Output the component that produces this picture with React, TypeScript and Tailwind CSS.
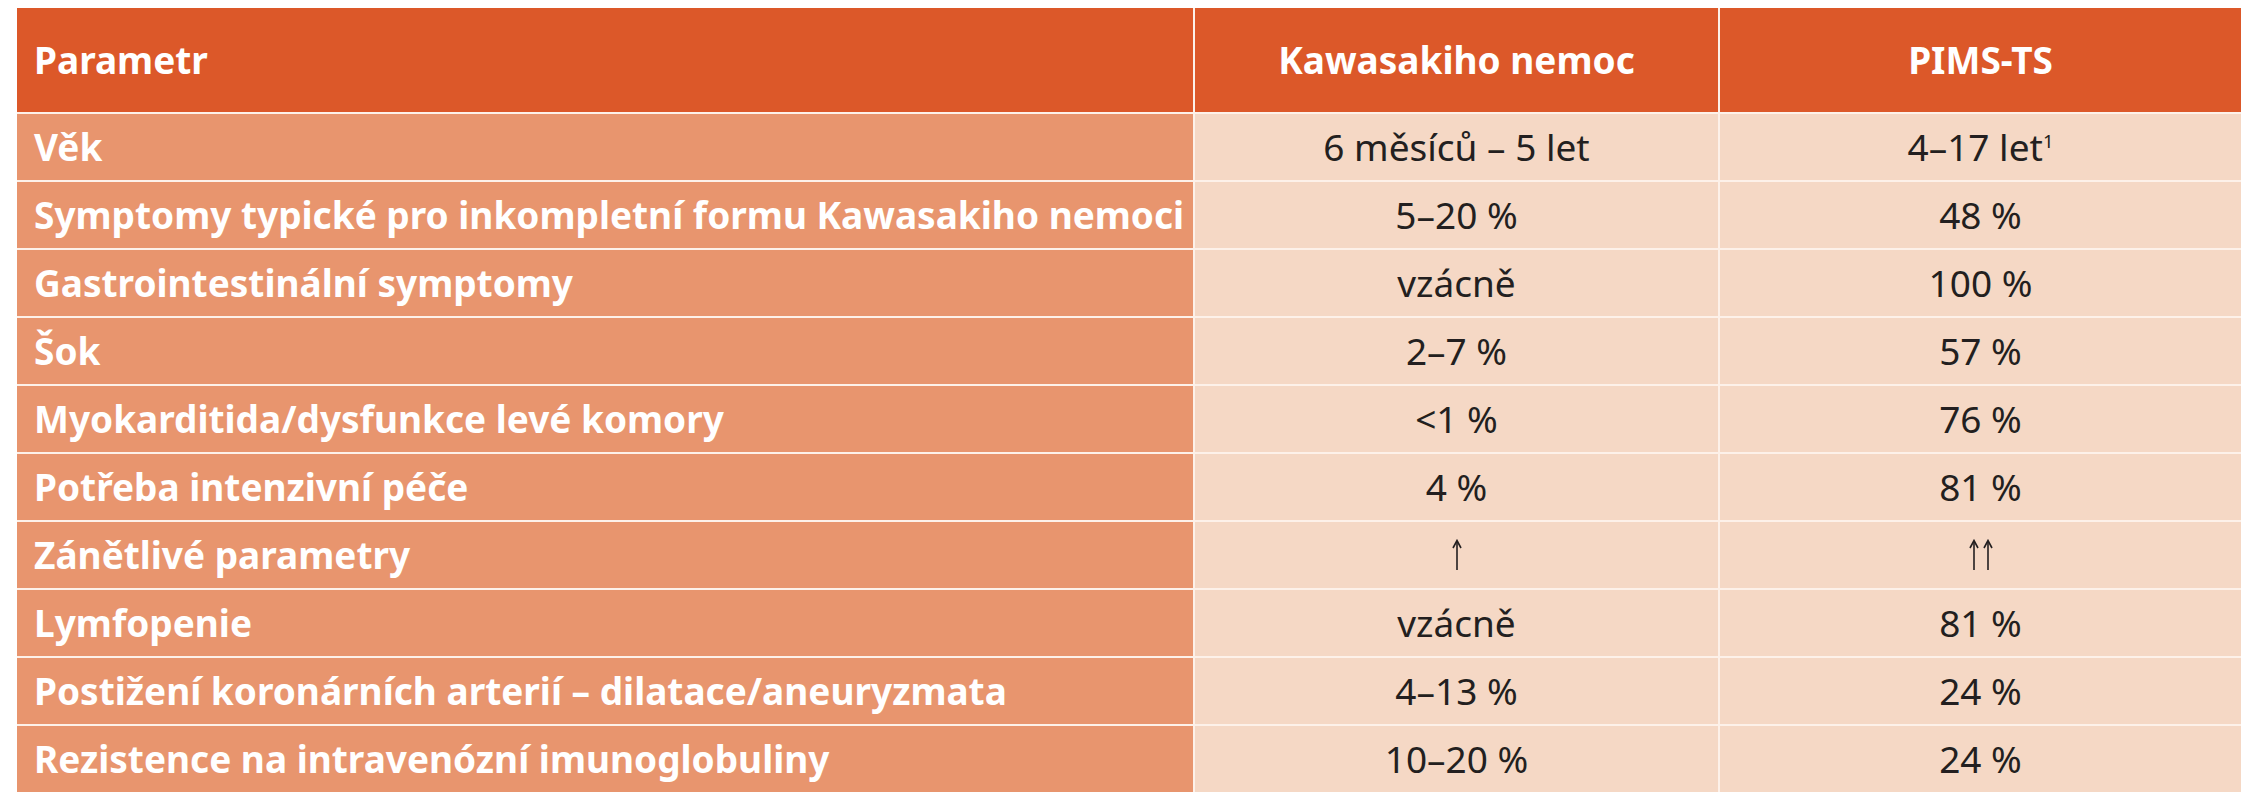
import React from "react";

type Row = { label: string; kawasaki: React.ReactNode; pims: React.ReactNode };

function UpArrow() {
  return (
    <svg width="12" height="32" viewBox="0 0 12 32" className="inline-block">
      <path d="M6 31V2" stroke="#231f20" strokeWidth="1.6" />
      <path d="M2 9L6 1.5L10 9" stroke="#231f20" strokeWidth="1.6" fill="none" />
    </svg>
  );
}

const ROWS: Row[] = [
  {
    label: "Věk",
    kawasaki: "6 měsíců – 5 let",
    pims: (
      <>
        4–17 let<sup className="relative -top-[0.35em] text-[0.5em]">1</sup>
      </>
    ),
  },
  { label: "Symptomy typické pro inkompletní formu Kawasakiho nemoci", kawasaki: "5–20 %", pims: "48 %" },
  { label: "Gastrointestinální symptomy", kawasaki: "vzácně", pims: "100 %" },
  { label: "Šok", kawasaki: "2–7 %", pims: "57 %" },
  { label: "Myokarditida/dysfunkce levé komory", kawasaki: "<1 %", pims: "76 %" },
  { label: "Potřeba intenzivní péče", kawasaki: "4 %", pims: "81 %" },
  {
    label: "Zánětlivé parametry",
    kawasaki: <UpArrow />,
    pims: (
      <span className="flex gap-[2px]">
        <UpArrow />
        <UpArrow />
      </span>
    ),
  },
  { label: "Lymfopenie", kawasaki: "vzácně", pims: "81 %" },
  { label: "Postižení koronárních arterií – dilatace/aneuryzmata", kawasaki: "4–13 %", pims: "24 %" },
  { label: "Rezistence na intravenózní imunoglobuliny", kawasaki: "10–20 %", pims: "24 %" },
];

export default function App() {
  return (
    <div className="min-h-[800px] w-full bg-white pl-[17px] pt-[8px] font-['Noto_Sans','Open_Sans',sans-serif]">
      <div className="grid w-[2224px] grid-cols-[1176px_523px_521px] gap-[2px] bg-[#fdf1e9]">
        <div className="flex h-[104px] items-center bg-[#dc5829] pl-[17px] text-[37px] font-bold text-white">
          Parametr
        </div>
        <div className="flex h-[104px] items-center justify-center bg-[#dc5829] text-[37px] font-bold text-white">
          Kawasakiho nemoc
        </div>
        <div className="flex h-[104px] items-center justify-center bg-[#dc5829] text-[37px] font-bold text-white">
          PIMS-TS
        </div>

        {ROWS.map((row) => (
          <React.Fragment key={row.label}>
            <div className="flex h-[66px] items-center bg-[#e8956e] pl-[17px] text-[37px] font-bold text-white">
              {row.label}
            </div>
            <div className="flex h-[66px] items-center justify-center bg-[#f5d8c5] text-[37px] text-[#231f20]">
              {row.kawasaki}
            </div>
            <div className="flex h-[66px] items-center justify-center bg-[#f5d8c5] text-[37px] text-[#231f20]">
              {row.pims}
            </div>
          </React.Fragment>
        ))}
      </div>
    </div>
  );
}
